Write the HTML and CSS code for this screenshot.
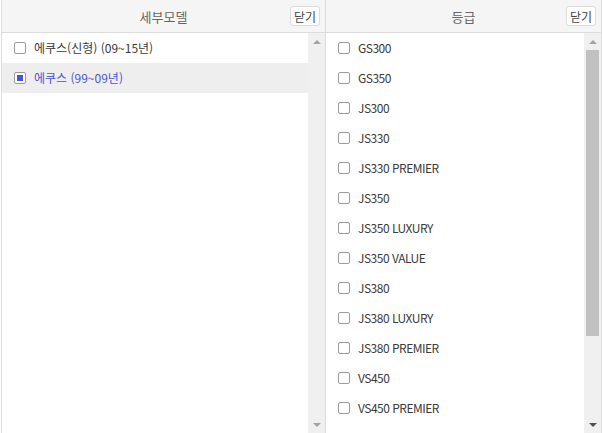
FILE: index.html
```html
<!DOCTYPE html>
<html lang="ko">
<head>
<meta charset="utf-8">
<link rel="stylesheet" href="styles.css">
</head>
<body>
<div class="wrap">
  <section class="panel panel-left">
    <header class="head">
      <span class="title">세부모델</span>
      <button class="close">닫기</button>
    </header>
    <div class="body">
      <ul class="list">
        <li class="item"><span class="cb"></span><span class="label">에쿠스(신형) (09~15년)</span></li>
        <li class="item selected"><span class="cb checked"></span><span class="label">에쿠스 (99~09년)</span></li>
      </ul>
      <div class="sbar">
        <div class="arrow up"></div>
        <div class="track"></div>
        <div class="arrow down"></div>
      </div>
    </div>
  </section>
  <section class="panel panel-right">
    <header class="head">
      <span class="title">등급</span>
      <button class="close">닫기</button>
    </header>
    <div class="body">
      <ul class="list latin">
        <li class="item"><span class="cb"></span><span class="label">GS300</span></li>
        <li class="item"><span class="cb"></span><span class="label">GS350</span></li>
        <li class="item"><span class="cb"></span><span class="label">JS300</span></li>
        <li class="item"><span class="cb"></span><span class="label">JS330</span></li>
        <li class="item"><span class="cb"></span><span class="label">JS330 PREMIER</span></li>
        <li class="item"><span class="cb"></span><span class="label">JS350</span></li>
        <li class="item"><span class="cb"></span><span class="label">JS350 LUXURY</span></li>
        <li class="item"><span class="cb"></span><span class="label">JS350 VALUE</span></li>
        <li class="item"><span class="cb"></span><span class="label">JS380</span></li>
        <li class="item"><span class="cb"></span><span class="label">JS380 LUXURY</span></li>
        <li class="item"><span class="cb"></span><span class="label">JS380 PREMIER</span></li>
        <li class="item"><span class="cb"></span><span class="label">VS450</span></li>
        <li class="item"><span class="cb"></span><span class="label">VS450 PREMIER</span></li>
      </ul>
      <div class="sbar active">
        <div class="arrow up"></div>
        <div class="track"><div class="thumb"></div></div>
        <div class="arrow down"></div>
      </div>
    </div>
  </section>
</div>
</body>
</html>
```
FILE: styles.css
```css
* { box-sizing: border-box; }
html, body { margin: 0; padding: 0; background: #fff; }
body {
  font-family: "Noto Sans CJK KR", "Noto Sans", sans-serif;
  font-size: 12px;
  color: #3a3a3a;
  width: 602px;
  height: 433px;
  overflow: hidden;
}
.wrap {
  display: flex;
  height: 433px;
  padding-left: 1px;
}
.panel {
  display: flex;
  flex-direction: column;
  height: 433px;
  border-left: 1px solid #dcdcdc;
}
.panel-left { width: 324px; }
.panel-right { width: 277px; border-right: 1px solid #dcdcdc; }
.head {
  height: 33px;
  flex: none;
  display: flex;
  align-items: center;
  justify-content: center;
  position: relative;
  background: #f5f5f5;
  border-bottom: 1px solid #dcdcdc;
}
.title {
  color: #666;
  font-size: 13px;
}
.close {
  position: absolute;
  right: 5px;
  top: 6px;
  width: 30px;
  height: 20px;
  padding: 0;
  border: 1px solid #dcdcdc;
  border-radius: 3px;
  background: #fff;
  font-family: inherit;
  font-size: 12px;
  color: #444;
  line-height: 17px;
}
.body {
  flex: 1;
  display: flex;
  min-height: 0;
}
.list {
  flex: 1;
  list-style: none;
  margin: 0;
  padding: 0;
  overflow: hidden;
}
.list.latin .label { letter-spacing: -0.5px; }
.item {
  height: 30px;
  display: flex;
  align-items: center;
  padding-left: 12px;
  gap: 8px;
}
.item .label { margin-top: -1px; }
.item.selected { background: #eeeeee; color: #4a56d2; }
.cb {
  width: 12px;
  height: 12px;
  border: 1px solid #9a9a9a;
  border-radius: 2px;
  background: #fff;
  display: flex;
  align-items: center;
  justify-content: center;
}
.cb.checked::after {
  content: "";
  width: 6px;
  height: 6px;
  background: #4a52e0;
}
.sbar {
  width: 17px;
  flex: none;
  display: flex;
  flex-direction: column;
  background: #f0f0f0;
}
.arrow {
  height: 17px;
  flex: none;
  display: flex;
  align-items: center;
  justify-content: center;
}
.arrow::after {
  content: "";
  width: 0;
  height: 0;
  border-left: 4px solid transparent;
  border-right: 4px solid transparent;
}
.arrow.up::after { border-bottom: 4px solid #a3a3a3; }
.arrow.down::after { border-top: 4px solid #a3a3a3; }
.sbar.active .arrow.down::after { border-top-color: #505050; }
.track { flex: 1; display: flex; flex-direction: column; }
.thumb {
  width: 13px;
  height: 286px;
  margin-left: 2px;
  background: #c1c1c1;
}
```
